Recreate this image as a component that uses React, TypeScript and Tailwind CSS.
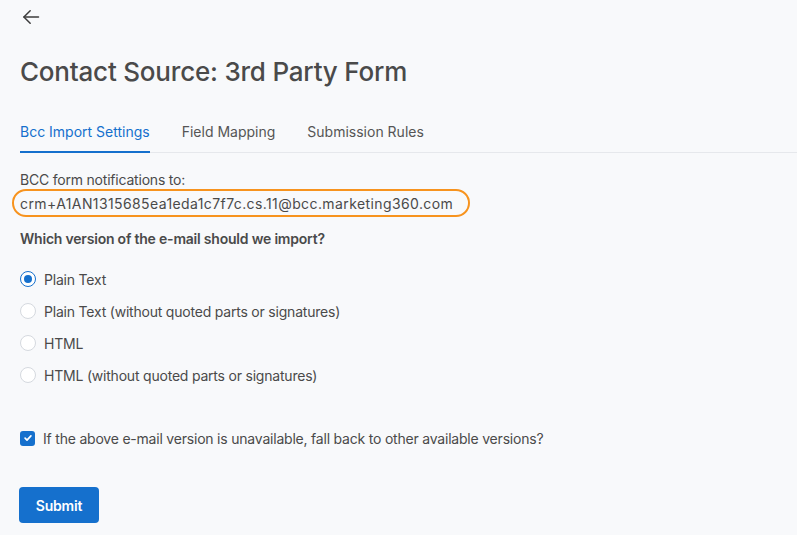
import React, { useState } from 'react';

const options = [
    'Plain Text',
    'Plain Text (without quoted parts or signatures)',
    'HTML',
    'HTML (without quoted parts or signatures)',
];

const tabs = ['Bcc Import Settings', 'Field Mapping', 'Submission Rules'];

const App = () => {
    const [selected, setSelected] = useState(0);
    const [fallback, setFallback] = useState(true);
    const [tab, setTab] = useState(0);

    return (
        <div className="min-h-screen bg-[#f8f9fb] px-5 text-[#4a4a4a] tracking-[-0.013em] font-['Inter','Liberation_Sans',sans-serif]">
            {/* Back */}
            <div className="pt-[7px]">
                <button className="flex h-[20px] w-[22px] items-center justify-center text-[#3c3c3c]">
                    <svg width="20" height="20" viewBox="0 0 24 24" fill="none" stroke="currentColor" strokeWidth="1.8" strokeLinecap="round" strokeLinejoin="round">
                        <path d="M21 12H3.5" />
                        <path d="M11 4.5L3.5 12l7.5 7.5" />
                    </svg>
                </button>
            </div>

            {/* Title */}
            <h1 className="mt-[29px] text-[26px] leading-[32px] font-medium text-[#4a4a4a]">
                Contact Source: 3rd Party Form
            </h1>

            {/* Tabs */}
            <div className="-mr-5 mt-[34px] flex gap-8 border-b border-[#e6e8ec]">
                {tabs.map((t, i) => (
                    <button
                        key={t}
                        onClick={() => setTab(i)}
                        className={
                            i === tab
                                ? '-mb-px border-b-2 border-[#1570cd] pb-[9px] text-[14px] leading-[20px] tracking-normal text-[#1570cd]'
                                : '-mb-px border-b-2 border-transparent pb-[9px] text-[14px] leading-[20px] tracking-normal text-[#555]'
                        }
                    >
                        {t}
                    </button>
                ))}
            </div>

            {/* BCC address */}
            <div className="mt-[18px] text-[14px] leading-[18px]">BCC form notifications to:</div>
            <div className="-ml-2 flex h-[28px] w-[458px] items-center rounded-full border-2 border-[#f7931e] pl-[6px] text-[14px] tracking-[0.4px]">
                crm+A1AN1315685ea1eda1c7f7c.cs.11@bcc.marketing360.com
            </div>

            <div className="mt-[12px] text-[14px] leading-[20px] font-semibold">
                Which version of the e-mail should we import?
            </div>

            {/* Version options */}
            <div className="mt-[20px] flex flex-col gap-3">
                {options.map((o, i) => (
                    <label key={o} className="flex h-5 cursor-pointer items-center gap-2 text-[14px]" onClick={() => setSelected(i)}>
                        {i === selected ? (
                            <span className="flex h-4 w-4 items-center justify-center rounded-full border border-[#1570cd] bg-white">
                                <span className="h-2 w-2 rounded-full bg-[#1570cd]" />
                            </span>
                        ) : (
                            <span className="h-4 w-4 rounded-full border border-[#d5d9df] bg-white" />
                        )}
                        {o}
                    </label>
                ))}
            </div>

            {/* Fallback */}
            <label className="mt-[43px] flex h-5 cursor-pointer items-center gap-[8px] text-[14px]" onClick={() => setFallback(!fallback)}>
                {fallback ? (
                    <span className="flex h-[15px] w-[15px] items-center justify-center rounded-[3px] bg-[#1570cd]">
                        <svg width="10" height="10" viewBox="0 0 12 12" fill="none" stroke="white" strokeWidth="2" strokeLinecap="round" strokeLinejoin="round">
                            <path d="M2.5 6.2l2.3 2.3 4.7-5" />
                        </svg>
                    </span>
                ) : (
                    <span className="h-[15px] w-[15px] rounded-[3px] border border-[#d5d9df] bg-white" />
                )}
                If the above e-mail version is unavailable, fall back to other available versions?
            </label>

            <button className="-ml-px mt-[39px] h-[36px] w-[80px] rounded-[4px] bg-[#1570cd] text-[14px] font-semibold text-white">
                Submit
            </button>
        </div>
    );
};

export default App;
